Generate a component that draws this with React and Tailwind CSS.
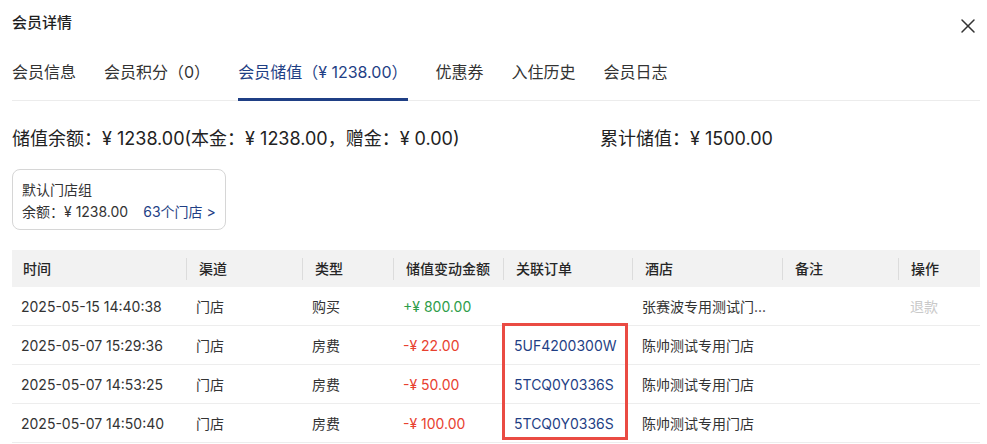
import React from "react";
import { X } from "lucide-react";

const font = { fontFamily: '"Inter", "Noto Sans CJK SC", sans-serif' };

const tabs = ["会员信息", "会员积分（0）", "会员储值（¥ 1238.00）", "优惠券", "入住历史", "会员日志"];

const cols = ["时间", "渠道", "类型", "储值变动金额", "关联订单", "酒店", "备注", "操作"];

const rows = [
  { time: "2025-05-15 14:40:38", channel: "门店", type: "购买", amount: "+¥ 800.00", plus: true, order: "", hotel: "张赛波专用测试门...", refund: true },
  { time: "2025-05-07 15:29:36", channel: "门店", type: "房费", amount: "-¥ 22.00", order: "5UF4200300W", hotel: "陈帅测试专用门店" },
  { time: "2025-05-07 14:53:25", channel: "门店", type: "房费", amount: "-¥ 50.00", order: "5TCQ0Y0336S", hotel: "陈帅测试专用门店" },
  { time: "2025-05-07 14:50:40", channel: "门店", type: "房费", amount: "-¥ 100.00", order: "5TCQ0Y0336S", hotel: "陈帅测试专用门店" },
];

const grid = "grid grid-cols-[174px_116px_91px_110px_129px_150px_116px_82px]";

export default function App() {
  return (
    <div className="w-[987px] h-[444px] bg-white overflow-hidden pl-3 pr-[7px] text-[#262626]" style={font}>
      {/* 标题 */}
      <div className="h-[44px] flex items-center justify-between">
        <div className="mt-[3px] text-[15px] font-medium text-[#1f1f1f]">会员详情</div>
        <button className="mt-2 text-[#333]">
          <X size={24} strokeWidth={1.5} />
        </button>
      </div>

      {/* 标签页 */}
      <div className="flex gap-7 border-b border-[#ececec] h-[57px]">
        {tabs.map((t, i) => (
          <div
            key={t}
            className={
              "relative pt-4 leading-6 text-[16px] " +
              (i === 2 ? "text-[#1f3f85]" : "text-[#333]")
            }
          >
            {t}
            {i === 2 && <div className="absolute left-0 right-0 bottom-[-1px] h-[3px] bg-[#1f3f85]" />}
          </div>
        ))}
      </div>

      {/* 储值汇总 */}
      <div className="flex mt-[25px] text-[18px] leading-[26px] text-[#222]">
        <div className="w-[588px]">储值余额：¥ 1238.00(本金：¥ 1238.00，赠金：¥ 0.00)</div>
        <div>累计储值：¥ 1500.00</div>
      </div>

      <div className="mt-[17px] w-[214px] border border-[#d6d6d6] rounded-lg pl-[9px] pt-[9px] pb-[6px] text-[14px] leading-[22px] text-[#333]">
        <div>默认门店组</div>
        <div className="flex gap-[15px]">
          <span>余额：¥ 1238.00</span>
          <span className="text-[#1f3f85]">63个门店 &gt;</span>
        </div>
      </div>

      {/* 表格 */}
      <div className="relative mt-5 w-[968px] text-[14px]">
        <div className={grid + " h-[37px] bg-[#f2f2f2] font-medium text-[#262626]"}>
          {cols.map((c, i) => (
            <div key={c} className="flex items-center">
              <div className={"h-[22px] flex items-center pl-3 " + (i > 0 ? "border-l border-[#dcdcdc]" : "pl-[11px]")}>
                {c}
              </div>
            </div>
          ))}
        </div>
        {rows.map((r, idx) => (
          <div key={idx} className={grid + " h-[39px] border-b border-[#ededed] items-center text-[#333]"}>
            <div className="pl-[9px]">{r.time}</div>
            <div className="pl-[10px]">{r.channel}</div>
            <div className="pl-[10px]">{r.type}</div>
            <div className={"pl-[10px] " + (r.plus ? "text-[#2e9d4a]" : "text-[#e8412f]")}>{r.amount}</div>
            <div className="pl-[11px] text-[#1f3f85]">{r.order}</div>
            <div className="pl-[10px] whitespace-nowrap">{r.hotel}</div>
            <div></div>
            <div className="pl-3 text-[#c9c9c9]">{r.refund ? "退款" : ""}</div>
          </div>
        ))}
        {/* 标注框 */}
        <div className="absolute left-[490px] top-[73px] w-[126px] h-[117px] border-[3px] border-[#ea4b43]" />
      </div>
    </div>
  );
}
